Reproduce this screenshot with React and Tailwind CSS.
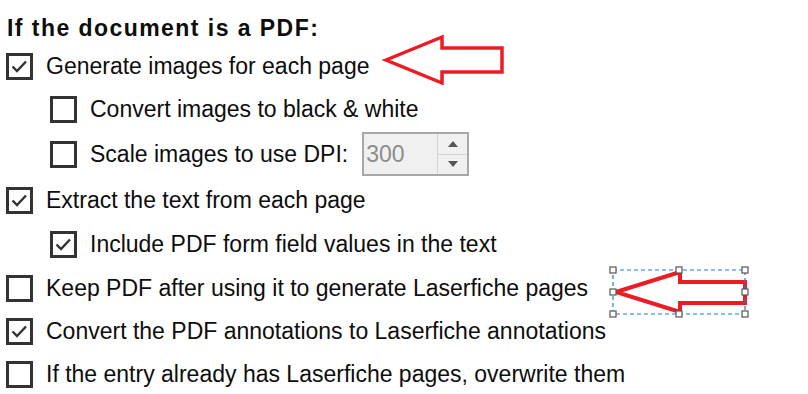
import React from "react";

const font = { fontFamily: '"Liberation Sans", Arial, sans-serif' };

function Box({ checked }) {
    return (
        <div className="w-[27px] h-[27px] border-[3px] border-[#333] bg-white shrink-0 relative">
            {checked && (
                <svg width="21" height="21" viewBox="0 0 21 21" className="absolute left-0 top-0">
                    <path d="M3.5 10.5 L8 15 L17 5.5" fill="none" stroke="#333" strokeWidth="2.4" />
                </svg>
            )}
        </div>
    );
}

function Row({ checked, indent, h, children }) {
    return (
        <div className={`flex items-center ${indent ? "pl-[50px]" : "pl-[6px]"} ${h}`}>
            <Box checked={checked} />
            <span className="ml-[13px] text-[23px] text-[#0d0d0d] whitespace-nowrap">{children}</span>
        </div>
    );
}

function SpinBox() {
    return (
        <div className="ml-[14px] w-[107px] h-[44px] border-2 border-[#a8a8a8] bg-[#f0f0f0] flex">
            <div className="flex-1 flex items-center pl-[2px] text-[23px] text-[#8c8c8c]">300</div>
            <div className="w-[30px] border-l border-[#d4d4d4] flex flex-col">
                <div className="flex-1 flex items-center justify-center border-b border-[#d4d4d4]">
                    <svg width="10" height="6" viewBox="0 0 10 6"><path d="M0 6 L5 0 L10 6 Z" fill="#555" /></svg>
                </div>
                <div className="flex-1 flex items-center justify-center">
                    <svg width="10" height="6" viewBox="0 0 10 6"><path d="M0 0 L5 6 L10 0 Z" fill="#555" /></svg>
                </div>
            </div>
        </div>
    );
}

function Handle({ x, y }) {
    return <rect x={x - 3} y={y - 3} width="6" height="6" fill="white" stroke="#555" strokeWidth="1.2" />;
}

export default function App() {
    return (
        <div className="relative w-[808px] h-[394px] bg-white overflow-hidden" style={font}>
            <div className="h-[44px] pl-[7px] pt-[14px] text-[23px] font-bold text-[#0d0d0d] tracking-[1.45px] leading-[28px]">
                If the document is a PDF:
            </div>

            <Row checked h="h-[44px]">Generate images for each page</Row>
            <Row indent h="h-[42px]">Convert images to black &amp; white</Row>
            <div className="flex items-center pl-[50px] h-[48px]">
                <Box />
                <span className="ml-[13px] text-[23px] text-[#0d0d0d] whitespace-nowrap">Scale images to use DPI:</span>
                <SpinBox />
            </div>
            <Row checked h="h-[44px]">Extract the text from each page</Row>
            <Row checked indent h="h-[44px]">Include PDF form field values in the text</Row>
            <Row h="h-[44px]">Keep PDF after using it to generate Laserfiche pages</Row>
            <Row checked h="h-[42px]">Convert the PDF annotations to Laserfiche annotations</Row>
            <Row h="h-[44px]">If the entry already has Laserfiche pages, overwrite them</Row>

            <svg className="absolute left-0 top-0" width="808" height="394" viewBox="0 0 808 394">
                <polygon
                    points="386,60 442,37 442,48 502,48 502,72 442,72 442,83"
                    fill="none"
                    stroke="#ed1c24"
                    strokeWidth="3.5"
                    strokeLinejoin="miter"
                />
                <polygon
                    points="616,292 680,272 680,282 745,282 745,303 680,303 680,312"
                    fill="none"
                    stroke="#ed1c24"
                    strokeWidth="4"
                />
                <rect x="613" y="270" width="132" height="44" fill="none" stroke="#1a7fd4" strokeWidth="1.2" strokeDasharray="4 3" />
                <Handle x={613} y={270} />
                <Handle x={679} y={270} />
                <Handle x={745} y={270} />
                <Handle x={613} y={292} />
                <Handle x={745} y={292} />
                <Handle x={613} y={314} />
                <Handle x={679} y={314} />
                <Handle x={745} y={314} />
            </svg>
        </div>
    );
}
